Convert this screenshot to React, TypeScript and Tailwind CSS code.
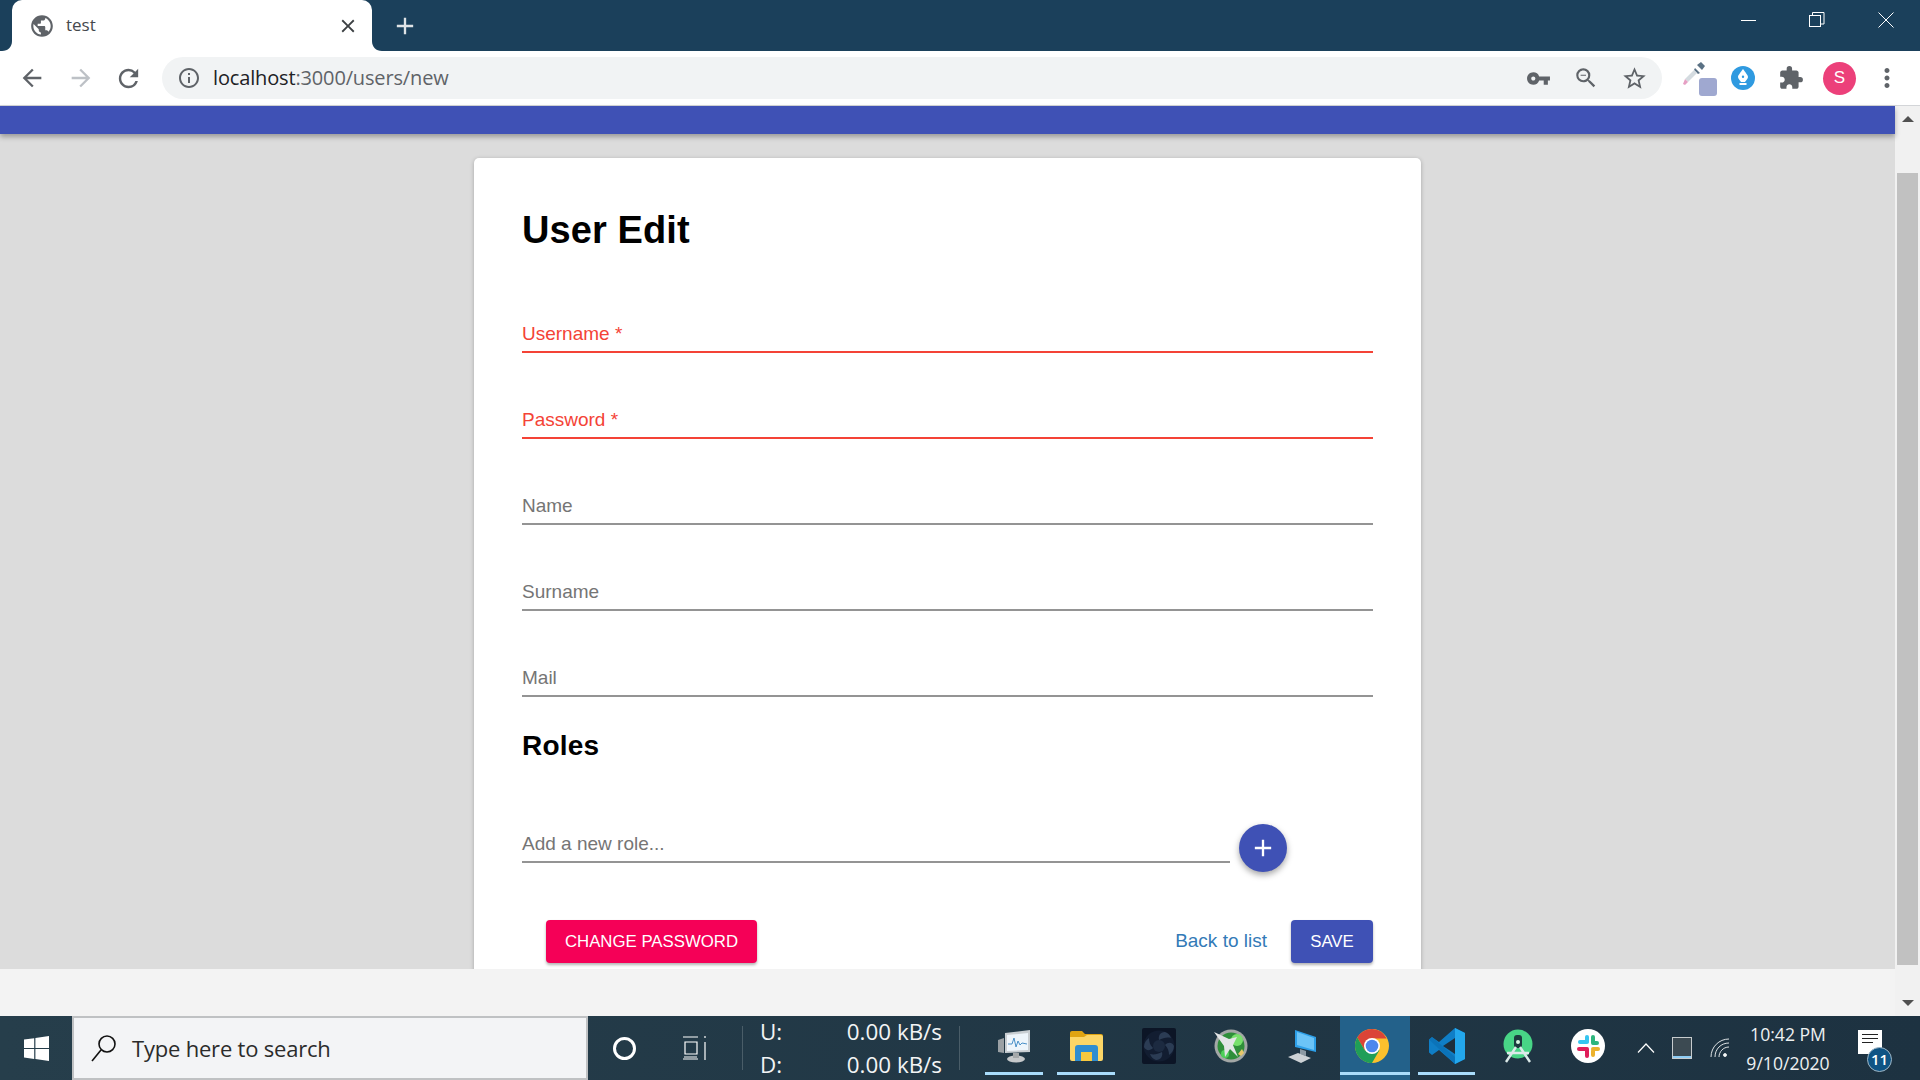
import React from "react";
import {
  MdAdd,
  MdArrowBack,
  MdArrowForward,
  MdClose,
  MdExtension,
  MdInfoOutline,
  MdMoreVert,
  MdPublic,
  MdRefresh,
  MdStarBorder,
  MdVpnKey,
  MdZoomOut,
} from "react-icons/md";

const sans = "font-['Liberation_Sans',Arial,sans-serif]";
const ui = "font-['Open_Sans','Noto_Sans',sans-serif]";

const WindowControls = () => (
  <div className="ml-auto flex h-full items-start">
    <div className="flex h-[40px] w-[68px] items-center justify-center">
      <div className="h-px w-[15px] bg-white" />
    </div>
    <div className="flex h-[40px] w-[69px] items-center justify-center">
      <svg width="16" height="16" viewBox="0 0 16 16" fill="none" stroke="#fff" strokeWidth="1">
        <rect x="0.5" y="3.5" width="11" height="11" />
        <path d="M3.5 3.5V0.5H15V12H11.5" />
      </svg>
    </div>
    <div className="flex h-[40px] w-[69px] items-center justify-center">
      <svg width="16" height="16" viewBox="0 0 16 16" stroke="#fff" strokeWidth="1">
        <path d="M0.5 0.5L15.5 15.5M15.5 0.5L0.5 15.5" />
      </svg>
    </div>
  </div>
);

const TabStrip = () => (
  <div className="flex h-[51px] shrink-0 items-stretch bg-[#1b405b] pl-[12px]">
    <div className="relative flex h-full w-[360px] items-center rounded-t-[10px] bg-white pl-[17px] pr-[13px]">
      <svg className="absolute bottom-0 left-[-10px]" width="10" height="10" viewBox="0 0 10 10">
        <path d="M10 0V10H0C6 10 10 6 10 0Z" fill="#fff" />
      </svg>
      <svg className="absolute bottom-0 right-[-10px]" width="10" height="10" viewBox="0 0 10 10">
        <path d="M0 0V10H10C4 10 0 6 0 0Z" fill="#fff" />
      </svg>
      <MdPublic className="text-[#5f6368]" size={26} />
      <span className={`${ui} ml-[11px] mt-[-2px] text-[17px] text-[#45494d]`}>test</span>
      <MdClose className="ml-auto text-[#3c4043]" size={22} />
    </div>
    <div className="flex h-full w-[66px] items-center justify-center">
      <MdAdd className="ml-[-1px] text-[#dfe3e6]" size={28} />
    </div>
    <WindowControls />
  </div>
);

const Toolbar = () => (
  <div className="flex h-[55px] shrink-0 items-center border-b border-[#d3d5d8] bg-white pl-[18px]">
    <MdArrowBack className="text-[#5f6368]" size={28} />
    <MdArrowForward className="ml-[21px] text-[#bdc1c6]" size={28} />
    <MdRefresh className="ml-[19px] text-[#5f6368]" size={29} />
    <div className="ml-[19px] flex h-[42px] w-[1500px] items-center rounded-full bg-[#f1f3f4] pl-[15px] pr-[15px]">
      <MdInfoOutline className="text-[#5f6368]" size={24} />
      <span className={`${ui} ml-[12px] text-[20px] tracking-[-0.15px] text-[#202124]`}>
        localhost<span className="text-[#5f6368]">:3000/users/new</span>
      </span>
      <MdVpnKey className="ml-auto text-[#5f6368]" size={25} />
      <MdZoomOut className="ml-[22px] text-[#5f6368]" size={26} />
      <MdStarBorder className="ml-[22px] mr-[-1px] text-[#5f6368]" size={27} />
    </div>
    <div className="relative ml-[19px] h-[36px] w-[36px]">
      <svg className="absolute left-0 top-[1px]" width="26" height="26" viewBox="0 0 26 26">
        <path d="M16 4l4-3 4 4-3 4z" fill="#5a7184" />
        <path d="M14 7l5 5-2 1-4-4z" fill="#5a7184" />
        <path d="M13 9l3 3-9 9-3-3z" fill="#d4dbe0" />
        <path d="M4 18l3 3-3 3-2-1z" fill="#e6a0c4" />
      </svg>
      <div className="absolute bottom-0 right-0 h-[18px] w-[18px] rounded-[3px] bg-[#9fa8d0]" />
    </div>
    <div className="ml-[14px] flex h-[24px] w-[24px] items-center justify-center rounded-full bg-[#2f9ae0]">
      <svg width="14" height="18" viewBox="0 0 14 18" fill="#fff">
        <path d="M7 0C5 3 2 6 2 8c0 2 2 3 3 5h4c1-2 3-3 3-5 0-2-3-5-5-8zM7 9a1.2 1.2 0 110-2.4A1.2 1.2 0 017 9z" />
        <rect x="3.5" y="14" width="7" height="2" />
      </svg>
    </div>
    <MdExtension className="ml-[23px] text-[#5f6368]" size={26} />
    <div className={`${sans} ml-[19px] flex h-[33px] w-[33px] items-center justify-center rounded-full bg-[#ec407a] text-[17px] text-white`}>
      S
    </div>
    <MdMoreVert className="ml-[16px] text-[#5f6368]" size={30} />
  </div>
);

const Field = ({ label, error }: { label: string; error?: boolean }) => (
  <div
    className={`flex h-[36px] items-end border-b-2 pb-[6px] text-[19px] leading-[22px] ${
      error ? "border-[#f44336] text-[#f44336]" : "border-[#949494] text-[#757575]"
    }`}
  >
    {label}
  </div>
);

const Card = () => (
  <div className={`${sans} mx-auto mt-[24px] w-[947px] rounded-t-[5px] bg-white pb-[40px] pl-[48px] pr-[48px] pt-[50px] shadow-[0_1px_4px_rgba(0,0,0,0.25)]`}>
    <h1 className="text-[38px] font-bold leading-[44px] tracking-[0.1px] text-black">User Edit</h1>
    <div className="mt-[65px] flex flex-col gap-[50px]">
      <Field label="Username *" error />
      <Field label="Password *" error />
      <Field label="Name" />
      <Field label="Surname" />
      <Field label="Mail" />
    </div>
    <h2 className="mt-[33px] text-[28px] font-bold leading-[32px] tracking-[0.2px] text-black">Roles</h2>
    <div className="mt-[62px] flex items-start">
      <div className="w-[708px] pt-[3px]">
        <Field label="Add a new role..." />
      </div>
      <div className="ml-[9px] flex h-[48px] w-[48px] items-center justify-center rounded-full bg-[#3f51b5] shadow-[0_3px_6px_rgba(0,0,0,0.35)]">
        <MdAdd className="text-white" size={28} />
      </div>
    </div>
    <div className="mt-[48px] flex items-center pl-[24px]">
      <div className="flex h-[43px] w-[211px] items-center justify-center rounded-[4px] bg-[#f50057] text-[16.8px] text-white shadow-[0_2px_3px_rgba(0,0,0,0.3)]">
        CHANGE PASSWORD
      </div>
      <span className="ml-auto text-[19px] text-[#337ab7]">Back to list</span>
      <div className="ml-[24px] flex h-[43px] w-[82px] items-center justify-center rounded-[4px] bg-[#3f51b5] text-[16.8px] text-white shadow-[0_2px_3px_rgba(0,0,0,0.3)]">
        SAVE
      </div>
    </div>
  </div>
);

const Scrollbar = () => (
  <div className="flex w-[25px] shrink-0 flex-col items-center bg-[#f1f1f1]">
    <div className="flex h-[26px] w-full shrink-0 items-center justify-center">
      <div className="h-0 w-0 border-x-[6px] border-b-[6px] border-x-transparent border-b-[#505050]" />
    </div>
    <div className="mt-[41px] h-[792px] w-[21px] shrink-0 bg-[#c1c1c1]" />
    <div className="flex flex-1 items-center justify-center pt-[24px]">
      <div className="h-0 w-0 border-x-[6px] border-t-[6px] border-x-transparent border-t-[#505050]" />
    </div>
  </div>
);

const WindowsLogo = () => (
  <svg width="25" height="25" viewBox="0 0 25 25" fill="#fff">
    <path d="M0 3.6l10.2-1.4v9.7H0zM11.4 2l13.6-2v11.9H11.4zM0 13.1h10.2v9.8L0 21.5zM11.4 13.1H25V25l-13.6-2z" />
  </svg>
);

const ResourceMonitorIcon = () => (
  <svg width="34" height="34" viewBox="0 0 34 34">
    <path d="M1 11l6-2v15l-6-1z" fill="#9aa0a4" />
    <path d="M8 4l25-3v22L8 24z" fill="#c9ced2" />
    <path d="M10 6l21-2v17l-21 1z" fill="#eef5fb" />
    <path d="M11 15h4l2-6 2 9 2-6 2 4 2-2 5 1" stroke="#4a90c8" strokeWidth="1" fill="none" />
    <ellipse cx="19" cy="30" rx="9" ry="3.5" fill="#c5c8ca" />
    <rect x="16" y="24" width="6" height="5" fill="#a4a8aa" />
  </svg>
);

const ExplorerIcon = () => (
  <svg width="33" height="30" viewBox="0 0 33 30">
    <path d="M0 2a2 2 0 012-2h10l3 3h16a2 2 0 012 2v4H0z" fill="#e0a411" />
    <path d="M0 6h14l3-2h14a2 2 0 012 2v22a2 2 0 01-2 2H2a2 2 0 01-2-2z" fill="#fcd667" />
    <path d="M5 30V17a3 3 0 013-3h17a3 3 0 013 3v13h-6v-9H11v9z" fill="#2f8dd0" />
    <rect x="11" y="21" width="11" height="9" fill="#f8c93f" />
  </svg>
);

const FanIcon = () => (
  <svg width="34" height="36" viewBox="0 0 34 36">
    <rect width="34" height="36" rx="2" fill="#0c1526" />
    <circle cx="17" cy="18" r="15.5" fill="#121d31" />
    <g fill="#2b3c54">
      <path d="M17 12C16 8 18 4 23 4c3 1 5 3 6 6-4-1-8 0-12 2z" />
      <path d="M23 17c3-3 7-3 9 1 0 4-2 7-5 9 0-4-1-7-4-10z" />
      <path d="M20 24c1 4-1 8-6 8-3-1-5-3-6-6 4 1 8 0 12-2z" />
      <path d="M11 20c-3 3-7 3-9-1 0-4 2-7 5-9 0 4 1 7 4 10z" />
    </g>
    <circle cx="17" cy="18" r="6" fill="#1c2a40" />
  </svg>
);

const AfterburnerIcon = () => (
  <svg width="34" height="34" viewBox="0 0 34 34">
    <circle cx="17" cy="17" r="16.5" fill="#a3a7a6" />
    <circle cx="17" cy="17" r="13.5" fill="#2f8f3a" />
    <circle cx="23" cy="11" r="6" fill="#78e06c" />
    <circle cx="11" cy="25" r="4" fill="#4fd05a" />
    <path d="M0 3l15 7 8-2-4 8 5 12-8-8-5 8-1-11z" fill="#e3e5e6" />
    <path d="M24 25l4-5 2 4-3 3z" fill="#e8c76a" />
  </svg>
);

const NetworkIcon = () => (
  <svg width="34" height="36" viewBox="0 0 34 36">
    <path d="M9 2l21 7v15L9 19z" fill="#2d9fe8" />
    <path d="M11 4l17 6v12L11 17z" fill="#6cc4f7" />
    <path d="M14 21l6 2v5l-6-2z" fill="#8d9aa3" />
    <path d="M2 29l10-4 13 5-10 5z" fill="#cdd2d5" />
  </svg>
);

const ChromeIcon = () => (
  <svg width="34" height="34" viewBox="0 0 34 34">
    <circle cx="17" cy="17" r="17" fill="#fbc02d" />
    <path d="M17 0A17 17 0 002.3 8.5l7.6 13L17 9.5h14.7A17 17 0 0017 0z" fill="#db4437" />
    <path d="M2.3 8.5A17 17 0 0017 34l7.4-12.7-14.5.2z" fill="#1f9e58" />
    <circle cx="17" cy="17" r="8" fill="#fff" />
    <circle cx="17" cy="17" r="6.3" fill="#4d87ee" />
  </svg>
);

const VsCodeIcon = () => (
  <svg width="36" height="36" viewBox="0 0 36 36">
    <path d="M26 0L36 5v26l-10 5-16-14L3 27l-3-2.5V11.5L3 9l7 5z" fill="#0f7ec6" />
    <path d="M26 0l10 5v26l-10 5z" fill="#23a7ec" />
    <path d="M0 11.5L3 9l23 20v7L0 11.5z" fill="#0a6fb4" opacity="0.7" />
    <path d="M26 10L14 18l12 8z" fill="#1d2f3d" />
  </svg>
);

const AndroidStudioIcon = () => (
  <svg width="34" height="34" viewBox="0 0 34 34">
    <circle cx="17" cy="15" r="14.5" fill="#48d586" />
    <rect x="13" y="6" width="8" height="13" rx="3" fill="#1d3a3f" />
    <circle cx="17" cy="13" r="2" fill="#d7f5e3" />
    <path d="M15 18L5 33M19 18l10 15M6 24h22" stroke="#dceae9" strokeWidth="2.4" fill="none" />
  </svg>
);

const SlackIcon = () => (
  <svg width="34" height="34" viewBox="0 0 34 34">
    <circle cx="17" cy="17" r="17" fill="#fff" />
    <rect x="7" y="11" width="11" height="4" rx="2" fill="#36c5f0" />
    <rect x="14" y="6" width="4" height="8" rx="2" fill="#36c5f0" />
    <rect x="20" y="6" width="4" height="10" rx="2" fill="#2eb67d" />
    <rect x="21" y="12" width="7" height="4" rx="2" fill="#2eb67d" />
    <rect x="20" y="18" width="9" height="4" rx="2" fill="#ecb22e" />
    <rect x="20" y="20" width="4" height="8" rx="2" fill="#ecb22e" />
    <rect x="14" y="18" width="4" height="11" rx="2" fill="#e01e5a" />
    <rect x="6" y="18" width="11" height="4" rx="2" fill="#e01e5a" />
  </svg>
);

const TaskIcon = ({
  width,
  active,
  highlight,
  children,
}: {
  width: string;
  active?: boolean;
  highlight?: boolean;
  children?: React.ReactNode;
}) => (
  <div className={`relative flex h-full shrink-0 items-center justify-center pb-[4px] ${width} ${highlight ? "bg-[#23618a]" : ""}`}>
    {children}
    {active && <div className="absolute bottom-[5px] left-0 h-[3px] w-full bg-[#a9dcfb]" />}
  </div>
);

const Taskbar = () => (
  <div className={`${ui} flex h-[64px] shrink-0 items-stretch bg-gradient-to-r from-[#263e4b] to-[#1d3241] text-white`}>
    <div className="flex w-[72px] shrink-0 items-center justify-center">
      <WindowsLogo />
    </div>
    <div className="flex w-[516px] shrink-0 items-center border-2 border-[#bfc1c3] bg-[#f3f4f6] pl-[17px]">
      <svg width="26" height="28" viewBox="0 0 26 28" fill="none" stroke="#111" strokeWidth="1.6">
        <circle cx="16" cy="10" r="8" />
        <path d="M10 16L1 27" />
      </svg>
      <span className="ml-[15px] text-[22px] tracking-[-0.2px] text-[#2b2b2b]">Type here to search</span>
    </div>
    <div className="flex w-[70px] shrink-0 items-center justify-center">
      <div className="ml-[2px] h-[23px] w-[23px] rounded-full border-[3px] border-white" />
    </div>
    <div className="flex w-[76px] shrink-0 items-center justify-center">
      <svg width="26" height="24" viewBox="0 0 26 24" fill="none" stroke="#fff" strokeWidth="1.2">
        <path d="M0 1h15M0 23h15M2 6h12v12H2zM1 21h13M22 0v2M22 6v18" />
      </svg>
    </div>
    <div className="my-[10px] ml-[8px] w-px shrink-0 bg-[#4a5d68]" />
    <div className="ml-[17px] flex w-[182px] shrink-0 flex-col justify-center gap-[8px] text-[22.4px] leading-[25px] text-[#f2f4f5]">
      <div className="flex justify-between">
        <span>U:</span>
        <span>0.00 kB/s</span>
      </div>
      <div className="flex justify-between">
        <span>D:</span>
        <span>0.00 kB/s</span>
      </div>
    </div>
    <div className="my-[10px] ml-[17px] w-px shrink-0 bg-[#4a5d68]" />
    <div className="ml-[25px] flex">
      <TaskIcon width="w-[58px]" active><ResourceMonitorIcon /></TaskIcon>
      <TaskIcon width="w-[14px]" />
      <TaskIcon width="w-[58px]" active><ExplorerIcon /></TaskIcon>
      <TaskIcon width="w-[22px]" />
      <TaskIcon width="w-[44px]"><FanIcon /></TaskIcon>
      <TaskIcon width="w-[28px]" />
      <TaskIcon width="w-[44px]"><AfterburnerIcon /></TaskIcon>
      <TaskIcon width="w-[28px]" />
      <TaskIcon width="w-[44px]"><NetworkIcon /></TaskIcon>
      <TaskIcon width="w-[15px]" />
      <TaskIcon width="w-[63px]" active highlight><ChromeIcon /></TaskIcon>
      <TaskIcon width="w-[7px]" active highlight />
      <TaskIcon width="w-[8px]" />
      <TaskIcon width="w-[57px]" active><VsCodeIcon /></TaskIcon>
      <TaskIcon width="w-[14px]" />
      <TaskIcon width="w-[57px]"><AndroidStudioIcon /></TaskIcon>
      <TaskIcon width="w-[13px]" />
      <TaskIcon width="w-[57px]"><SlackIcon /></TaskIcon>
    </div>
    <div className="ml-[10px] flex w-[40px] shrink-0 items-center justify-center">
      <svg width="18" height="10" viewBox="0 0 18 10" fill="none" stroke="#fff" strokeWidth="1.2">
        <path d="M1 9.5L9 1l8 8.5" />
      </svg>
    </div>
    <div className="ml-[2px] flex w-[28px] shrink-0 items-center justify-center">
      <div className="h-[20px] w-[18px] border-b-2 border-[#8fcdf4] bg-[#3c4a52] shadow-[0_0_0_1px_#c7ccce]" />
    </div>
    <div className="ml-[8px] flex w-[32px] shrink-0 items-center justify-center">
      <svg width="20" height="20" viewBox="0 0 20 20" fill="none" stroke="#dfe4e6" strokeWidth="1">
        <path d="M1 19C1 9 9 1 19 1M5 19C5 11 11 5 19 5M9 19c0-5 4-10 10-10" />
        <circle cx="15" cy="17" r="1.5" fill="#fff" />
      </svg>
    </div>
    <div className="ml-[2px] flex w-[100px] shrink-0 flex-col items-center justify-center gap-[7px] text-[17.6px] leading-[22px] text-[#eef1f2]">
      <span>10:42 PM</span>
      <span>9/10/2020</span>
    </div>
    <div className="relative ml-[20px] flex w-[30px] shrink-0 items-start pt-[14px]">
      <div className="flex h-[24px] w-[24px] flex-col gap-[3px] bg-white p-[4px]">
        <div className="h-px w-full bg-[#222]" />
        <div className="h-px w-full bg-[#222]" />
        <div className="h-px w-2/3 bg-[#222]" />
      </div>
      <div className="absolute left-[9px] top-[31px] flex h-[25px] w-[25px] items-center justify-center rounded-full border border-[#9fb6c5] bg-[#0f5484] text-[15px] font-semibold text-white">
        11
      </div>
    </div>
  </div>
);

const App: React.FC = () => {
  return (
    <div className="flex h-screen w-full flex-col overflow-hidden bg-[#f3f3f3]">
      <TabStrip />
      <Toolbar />
      <div className="flex min-h-0 flex-1">
        <div className="flex min-w-0 flex-1 flex-col">
          <div className="relative z-10 h-[28px] shrink-0 bg-[#3f51b5] shadow-[0_3px_5px_rgba(0,0,0,0.3)]" />
          <div className="h-[835px] shrink-0 overflow-hidden bg-[#dcdcdc]">
            <Card />
          </div>
          <div className="flex-1 bg-[#f3f3f3]" />
        </div>
        <Scrollbar />
      </div>
      <Taskbar />
    </div>
  );
};

export default App;
